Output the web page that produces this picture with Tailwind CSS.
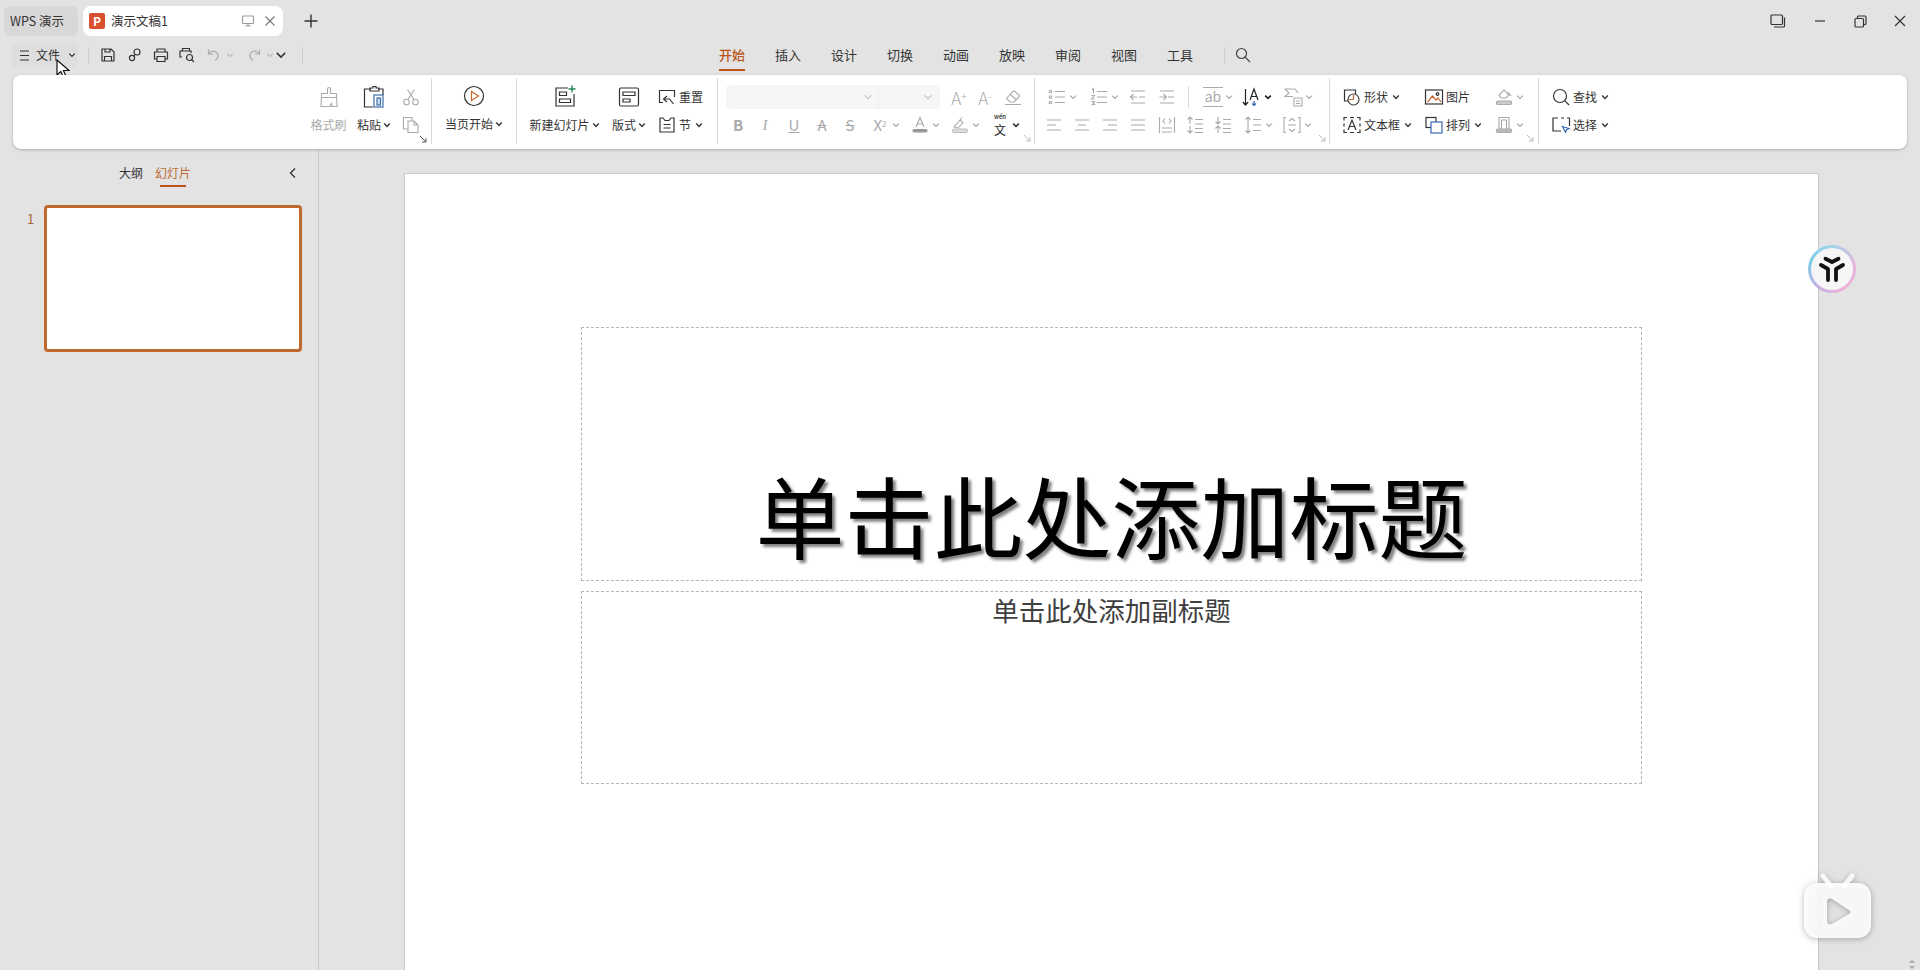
<!DOCTYPE html>
<html lang="zh-CN">
<head>
  <meta charset="UTF-8" />
  <title>演示文稿1 - WPS 演示</title>
  <script src="https://cdn.jsdelivr.net/npm/@tailwindcss/browser@4"></script>
</head>
<body class="bg-[#e3e3e3] overflow-hidden font-['Noto_Sans_CJK_SC','Noto_Sans',sans-serif] text-[12px] text-[#333]">
  <svg class="hidden">
    <symbol id="chev" viewBox="0 0 8 8"><path d="M1.2 2.6 4 5.4 6.8 2.6"/></symbol>
  </svg>

  <div class="relative w-[1920px] h-[970px] overflow-hidden flex flex-col">
    <!-- tab bar -->
    <div class="h-[38px] pt-[6px] pl-[4px] flex shrink-0">
      <div class="w-[74px] h-[30px] rounded-md bg-[#d8d8d8] flex items-center pl-[6px] text-[12.5px] whitespace-nowrap">WPS 演示</div>
      <div class="ml-[5px] w-[200px] h-[30px] rounded-lg bg-white flex items-center pl-[6px]">
        <span class="w-4 h-4 rounded-[2px] bg-[#d9502e] text-white text-[12px] font-bold leading-4 text-center">P</span>
        <span class="ml-[6px] w-[130px] text-[12.5px]">演示文稿1</span>
        <svg class="w-[14px] h-[14px] fill-none stroke-[#999] stroke-[1.1]" viewBox="0 0 14 14"><rect x="1.5" y="2" width="11" height="7.5" rx="1"/><path d="M7 9.5v2.5M4.5 12h5"/></svg>
        <svg class="ml-[9px] w-[12px] h-[12px] fill-none stroke-[#777] stroke-[1.1]" viewBox="0 0 12 12"><path d="M1.5 1.5l9 9M10.5 1.5l-9 9"/></svg>
      </div>
      <svg class="ml-[21px] mt-[8px] w-[14px] h-[14px] fill-none stroke-[#333] stroke-[1.4]" viewBox="0 0 14 14"><path d="M7 .5v13M.5 7h13"/></svg>
      <div class="ml-auto flex items-center h-[30px] text-[#333]">
        <svg class="w-[16px] h-[14px] fill-none stroke-current stroke-[1.2]" viewBox="0 0 16 14"><rect x="1" y="1" width="11.5" height="9.5" rx="1"/><path d="M14.5 3.5V12a1 1 0 0 1-1 1H4"/></svg>
        <svg class="ml-[28px] w-[12px] h-[12px] fill-none stroke-current stroke-[1.2]" viewBox="0 0 12 12"><path d="M1 6h10"/></svg>
        <svg class="ml-[28px] w-[13px] h-[13px] fill-none stroke-current stroke-[1.2]" viewBox="0 0 13 13"><rect x="1" y="3.5" width="8.5" height="8.5" rx="1"/><path d="M3.5 3.5V2a1 1 0 0 1 1-1H11a1 1 0 0 1 1 1v6.5a1 1 0 0 1-1 1H9.5"/></svg>
        <svg class="ml-[27px] mr-[14px] w-[12px] h-[12px] fill-none stroke-current stroke-[1.2]" viewBox="0 0 12 12"><path d="M1 1l10 10M11 1 1 11"/></svg>
      </div>
    </div>

    <!-- quick access + menu tabs -->
    <div class="h-[34px] flex items-center shrink-0 relative">
      <div class="ml-[12px] w-[66px] h-[24px] rounded bg-[#dedede] flex items-center pl-[8px]">
        <svg class="w-[9px] h-[11px] fill-none stroke-[#333] stroke-[1.1]" viewBox="0 0 9 11"><path d="M0 1h9M0 5.500h9M0 10h9"/></svg>
        <span class="ml-[7px] w-[26px]">文件</span>
        <svg class="ml-[6px] w-2 h-2 fill-none stroke-[#333] stroke-[1.3]"><use href="#chev"/></svg>
      </div>
      <span class="ml-[10px] w-px h-[17px] bg-[#cfcfcf]"></span>
      <svg class="ml-[11px] w-4 h-4 fill-none stroke-[#333] stroke-[1.2]" viewBox="0 0 16 16"><path d="M2 2h9l3 3v9H2zM5 2v3h5V2M4.5 14V9.5h7V14"/></svg>
      <svg class="ml-[11px] w-4 h-4 fill-none stroke-[#333] stroke-[1.2]" viewBox="0 0 16 16"><circle cx="10" cy="5" r="3"/><circle cx="5" cy="11" r="2.6"/><path d="M8 7.5 7 9"/></svg>
      <svg class="ml-[10px] w-4 h-4 fill-none stroke-[#333] stroke-[1.2]" viewBox="0 0 16 16"><path d="M4 5V2h8v3M4 12H1.5V5h13v7H12M4 9.5h8V14.5H4z"/></svg>
      <svg class="ml-[10px] w-4 h-4 fill-none stroke-[#333] stroke-[1.2]" viewBox="0 0 16 16"><path d="M3.5 4V1.5h7V4M3 10H1V4h11v2"/><circle cx="10.5" cy="10.5" r="3"/><path d="M12.8 12.8 15 15"/></svg>
      <svg class="ml-[12px] w-[14px] h-[14px] fill-none stroke-[#aaa] stroke-[1.2]" viewBox="0 0 14 14"><path d="M1.500 1.500v4.500H6M2 5.500a5 5 0 0 1 8.500 0c1 2.500.5 5-2.500 7"/></svg>
      <svg class="ml-[5px] w-2 h-2 fill-none stroke-[#bbb] stroke-[1.3]"><use href="#chev"/></svg>
      <svg class="ml-[13px] w-[14px] h-[14px] fill-none stroke-[#aaa] stroke-[1.2]" viewBox="0 0 14 14"><path d="M12.500 1.500v4.500H8M12 5.500a5 5 0 0 0-8.500 0c-1 2.500-.5 5 2.500 7"/></svg>
      <svg class="ml-[5px] w-2 h-2 fill-none stroke-[#bbb] stroke-[1.3]"><use href="#chev"/></svg>
      <svg class="ml-[1px] w-[12px] h-[12px] fill-none stroke-[#333] stroke-[1]" viewBox="0 0 8 8"><path d="M1.200 2.600 4 5.400 6.800 2.600"/></svg>
      <span class="ml-[15px] w-px h-[17px] bg-[#cfcfcf]"></span>
      <nav class="ml-[401px] flex text-[13px] text-center">
        <a class="relative w-[56px] text-[#b9531a] font-medium">开始<span class="absolute left-[15px] top-[24px] w-[26px] h-[2px] bg-[#b9531a]"></span></a>
        <a class="w-[56px]">插入</a>
        <a class="w-[56px]">设计</a>
        <a class="w-[56px]">切换</a>
        <a class="w-[56px]">动画</a>
        <a class="w-[56px]">放映</a>
        <a class="w-[56px]">审阅</a>
        <a class="w-[56px]">视图</a>
        <a class="w-[56px]">工具</a>
      </nav>
      <span class="ml-[16px] w-px h-[17px] bg-[#cfcfcf]"></span>
      <svg class="ml-[10px] w-4 h-4 fill-none stroke-[#444] stroke-[1.2]" viewBox="0 0 16 16"><circle cx="6.5" cy="6.5" r="5"/><path d="M10.2 10.2 15 15"/></svg>
    </div>

    <!-- ribbon -->
    <div class="mt-[3px] ml-[13px] w-[1894px] h-[74px] pb-[2px] bg-white rounded-lg shadow-[0_1px_3px_rgba(0,0,0,0.25)] flex items-center shrink-0 relative z-10">
      <!-- clipboard -->
      <div class="relative w-[419px] h-[66px] border-r border-[#d9d9d9] flex items-center pl-[297px]">
        <div class="w-[37px] flex flex-col items-center text-[#aaa]">
          <div class="h-[28px] flex items-center">
            <svg class="w-[22px] h-[22px] fill-none stroke-current stroke-[1.1]" viewBox="0 0 22 22"><path d="M9.500 7.500V3a1.500 1.500 0 0 1 3 0v4.500h6l.5 13H14l-.5-3-1.500 3H3l.5-13zM3.500 11.500h15"/></svg>
          </div>
          <div class="h-[28px] leading-[28px] whitespace-nowrap">格式刷</div>
        </div>
        <div class="ml-[7px] w-[40px] flex flex-col items-center">
          <div class="h-[28px] flex items-center">
            <svg class="w-[24px] h-[24px] fill-none stroke-[#333] stroke-[1.2]" viewBox="0 0 24 24"><path d="M9 4H2.500v18H11M16 4h5v6M8 6h9V3h-3V1.500h-3V3H8z"/><rect x="12" y="10" width="9" height="12" stroke="#3b6ea8"/><rect x="15" y="13" width="3.500" height="7" fill="#cfe0f2" stroke="#3b6ea8"/></svg>
          </div>
          <div class="h-[28px] flex items-center gap-[2px]">粘贴<svg class="w-2 h-2 fill-none stroke-[#333] stroke-[1.4]"><use href="#chev"/></svg></div>
        </div>
        <div class="ml-[3px] w-[28px] flex flex-col items-center text-[#aaa]">
          <div class="h-[28px] flex items-center">
            <svg class="w-[18px] h-[18px] fill-none stroke-current stroke-[1.1]" viewBox="0 0 18 18"><circle cx="4.500" cy="14" r="2.800"/><circle cx="13.500" cy="14" r="2.800"/><path d="M6 11.500 12.500 1.500M12 11.500 5.500 1.500"/></svg>
          </div>
          <div class="h-[28px] flex items-center">
            <svg class="w-[18px] h-[18px] fill-none stroke-current stroke-[1.1]" viewBox="0 0 18 18"><path d="M6 13H1.500V1.500H10V5M6 5h6l4 4v7.500H6zM12 5v4h4"/></svg>
          </div>
        </div>
        <svg class="absolute right-[4px] bottom-[1px] w-2 h-2 fill-none stroke-[#555] stroke-[1]" viewBox="0 0 8 8"><path d="M1 1l6 6M7 3v4H3"/></svg>
      </div>

      <!-- slideshow -->
      <div class="w-[85px] h-[66px] border-r border-[#d9d9d9] flex flex-col items-center">
        <div class="mt-[4px] h-[28px] flex items-center">
          <svg class="w-[22px] h-[22px] fill-none stroke-[#333] stroke-[1.200]" viewBox="0 0 22 22"><circle cx="11" cy="11" r="9.500"/><path d="M8.500 6.500 15.500 11l-7 4.500z" stroke="#c96a2e"/></svg>
        </div>
        <div class="h-[28px] flex items-center gap-[2px] whitespace-nowrap">当页开始<svg class="w-2 h-2 fill-none stroke-[#333] stroke-[1.4]"><use href="#chev"/></svg></div>
      </div>

      <!-- slides -->
      <div class="w-[201px] h-[66px] border-r border-[#d9d9d9] flex items-center pl-[12px]">
        <div class="w-[71px] flex flex-col items-center">
          <div class="h-[28px] flex items-center">
            <svg class="w-[24px] h-[24px] fill-none stroke-[#333] stroke-[1.200]" viewBox="0 0 24 24"><path d="M15 3H3v18h18V9"/><path d="M6.500 7h7v3.500h-7zM6.500 14h11v3.500h-11z"/><path d="M19 .500v7M15.500 4h7" stroke="#1f8a55" stroke-width="1.400"/></svg>
          </div>
          <div class="h-[28px] flex items-center gap-[2px] whitespace-nowrap">新建幻灯片<svg class="w-2 h-2 fill-none stroke-[#333] stroke-[1.4]"><use href="#chev"/></svg></div>
        </div>
        <div class="ml-[12px] w-[34px] flex flex-col items-center">
          <div class="h-[28px] flex items-center">
            <svg class="w-[22px] h-[22px] fill-none stroke-[#333] stroke-[1.200]" viewBox="0 0 22 22"><rect x="1.500" y="2" width="19" height="18" rx="1.500"/><path d="M5 6h12v3.500H5zM5 13h7v3H5z"/></svg>
          </div>
          <div class="h-[28px] flex items-center gap-[2px] whitespace-nowrap">版式<svg class="w-2 h-2 fill-none stroke-[#333] stroke-[1.4]"><use href="#chev"/></svg></div>
        </div>
        <div class="ml-[12px] flex flex-col">
          <div class="h-[28px] flex items-center">
            <svg class="w-[18px] h-[18px] fill-none stroke-[#333] stroke-[1.200]" viewBox="0 0 18 18"><path d="M5 14.500H1.500V2.500h15V9"/><path d="M9 8 5.500 11 9 14M5.500 11h6l4 5"/></svg>
            <span class="ml-[3px]">重置</span>
          </div>
          <div class="h-[28px] flex items-center">
            <svg class="w-[18px] h-[18px] fill-none stroke-[#333] stroke-[1.200]" viewBox="0 0 18 18"><path d="M5 2H2v14h14V2h-3l-2 2.500H7zM5.500 8.500h7M5.500 12h7"/></svg>
            <span class="ml-[3px]">节</span>
            <svg class="ml-[4px] w-2 h-2 fill-none stroke-[#333] stroke-[1.4]"><use href="#chev"/></svg>
          </div>
        </div>
      </div>

      <!-- font -->
      <div class="relative w-[317px] h-[66px] border-r border-[#d9d9d9] flex flex-col justify-center text-[#aaa]">
        <div class="h-[28px] flex items-center">
          <div class="ml-[8px] w-[214px] h-[24px] rounded bg-[#f6f6f6] flex items-center">
            <span class="w-[153px] flex justify-end pr-[5px] border-r border-[#eeeeee] h-full items-center"><svg class="w-[10px] h-[10px] fill-none stroke-[#ccc] stroke-[1]" viewBox="0 0 8 8"><use href="#chev"/></svg></span>
            <span class="w-[60px] flex justify-end pr-[6px] items-center"><svg class="w-[10px] h-[10px] fill-none stroke-[#ccc] stroke-[1]" viewBox="0 0 8 8"><use href="#chev"/></svg></span>
          </div>
          <span class="ml-[6px] w-[26px] text-[17px] font-light leading-none text-center">A<sup class="text-[10px]">+</sup></span>
          <span class="w-[26px] text-[17px] font-light leading-none text-center">A<sup class="text-[10px]">-</sup></span>
          <span class="ml-[2px] w-[26px] flex justify-center">
            <svg class="w-[18px] h-[18px] fill-none stroke-current stroke-[1.100]" viewBox="0 0 18 18"><path d="M2.500 10.500 9 3.500a1.500 1.500 0 0 1 2 0l4 3.500a1.500 1.500 0 0 1 0 2L10 14H6zM6.500 6.500l5.500 5M1 16.500h16"/></svg>
          </span>
        </div>
        <div class="h-[28px] flex items-center text-[15px]">
          <span class="ml-[8px] w-[24px] text-center font-bold">B</span>
          <span class="w-[30px] text-center italic [font-family:'Liberation_Serif',serif]">I</span>
          <span class="w-[28px] text-center underline">U</span>
          <span class="w-[28px] text-center line-through">A</span>
          <span class="w-[28px] text-center line-through">S</span>
          <span class="ml-[6px] w-[20px] text-center">X<sup class="text-[8px]">2</sup></span>
          <span class="w-3 flex justify-center"><svg class="w-2 h-2 fill-none stroke-[#aaa] stroke-[1.300]"><use href="#chev"/></svg></span>
          <span class="ml-[8px] w-[20px] flex justify-center">
            <svg class="w-[18px] h-[18px]" viewBox="0 0 18 18"><path d="M5 11 9 1.500 13 11M6.200 8h5.600" fill="none" stroke="#aaa" stroke-width="1.100"/><rect x="1.500" y="13" width="15" height="3.500" rx="1.500" fill="#999"/></svg>
          </span>
          <span class="w-3 flex justify-center"><svg class="w-2 h-2 fill-none stroke-[#aaa] stroke-[1.300]"><use href="#chev"/></svg></span>
          <span class="ml-[8px] w-[20px] flex justify-center">
            <svg class="w-[18px] h-[18px]" viewBox="0 0 18 18"><path d="M3 11 9 4l3 2.500-5 5.500zM11 1.500 8.500 5" fill="none" stroke="#aaa" stroke-width="1.100"/><rect x="1.500" y="13" width="15" height="3.500" rx="1.500" fill="#ddd" stroke="#bbb"/></svg>
          </span>
          <span class="w-3 flex justify-center"><svg class="w-2 h-2 fill-none stroke-[#aaa] stroke-[1.300]"><use href="#chev"/></svg></span>
          <span class="ml-[8px] w-[20px] h-[27px] flex flex-col items-center text-[#222]">
            <span class="text-[6px] leading-[9px] h-[9px] font-medium">wén</span><span class="text-[12px] leading-[18px] h-[18px]">文</span>
          </span>
          <span class="w-3 flex justify-center"><svg class="w-2 h-2 fill-none stroke-[#333] stroke-[1.500]"><use href="#chev"/></svg></span>
        </div>
        <svg class="absolute right-[3px] bottom-[2px] w-2 h-2 fill-none stroke-[#bbb] stroke-[1]" viewBox="0 0 8 8"><path d="M1 1l6 6M7 3v4H3"/></svg>
      </div>

      <!-- paragraph -->
      <div class="relative w-[295px] h-[66px] border-r border-[#d9d9d9] flex flex-col justify-center text-[#aaa]">
        <div class="h-[28px] flex items-center">
          <svg class="ml-[12px] w-5 h-5 fill-none stroke-current stroke-[1.100]" viewBox="0 0 20 20"><path d="M8 4.500h10M8 10h10M8 15.500h10"/><circle cx="3.500" cy="4.500" r="1.300"/><circle cx="3.500" cy="10" r="1.300"/><circle cx="3.500" cy="15.500" r="1.300"/></svg>
          <span class="w-3 flex justify-center"><svg class="w-2 h-2 fill-none stroke-[#aaa] stroke-[1.300]"><use href="#chev"/></svg></span>
          <svg class="ml-[10px] w-5 h-5 fill-none stroke-current stroke-[1.100]" viewBox="0 0 20 20"><path d="M8 4.500h10M8 10h10M8 15.500h10M3 2.500l1.500-1v5M2.500 8.500h3l-3 3.500h3M2.500 14.500h3l-1.500 1.500 1.500 1.500h-3"/></svg>
          <span class="w-3 flex justify-center"><svg class="w-2 h-2 fill-none stroke-[#aaa] stroke-[1.300]"><use href="#chev"/></svg></span>
          <svg class="ml-[7px] w-5 h-5 fill-none stroke-current stroke-[1.100]" viewBox="0 0 20 20"><path d="M3 4h14M3 16h14M11 10h6M9 10H2.500M5.500 7l-3 3 3 3"/></svg>
          <svg class="ml-[9px] w-5 h-5 fill-none stroke-current stroke-[1.100]" viewBox="0 0 20 20"><path d="M3 4h14M3 16h14M11 10h6M2.500 10H9M6.500 7l3 3-3 3"/></svg>
          <span class="ml-[11px] w-px h-[22px] bg-[#d9d9d9]"></span>
          <span class="ml-[14px] w-5 h-[20px] border-y border-[#aaa] text-[14px] leading-[16px] text-center">ab</span>
          <span class="w-3 flex justify-center"><svg class="w-2 h-2 fill-none stroke-[#aaa] stroke-[1.300]"><use href="#chev"/></svg></span>
          <svg class="ml-[7px] w-5 h-5 fill-none stroke-[#222] stroke-[1.200]" viewBox="0 0 20 20"><path d="M3.500 2v16M.800 15l2.700 3 2.700-3M8 13 12 2l4 11M9.300 9.500h5.400"/><path d="M12 14v4.500M10 16.500l2 2 2-2" stroke="#3568b5"/></svg>
          <span class="w-3 flex justify-center"><svg class="w-2 h-2 fill-none stroke-[#222] stroke-[1.600]"><use href="#chev"/></svg></span>
          <svg class="ml-[9px] w-5 h-5 fill-none stroke-current stroke-[1.100]" viewBox="0 0 20 20"><path d="M10 9.500H2l4-3.500-4-4h10l3 4M11 11h8v8h-8zM13 14h4M13 16.500h4"/></svg>
          <span class="w-3 flex justify-center"><svg class="w-2 h-2 fill-none stroke-[#aaa] stroke-[1.300]"><use href="#chev"/></svg></span>
        </div>
        <div class="h-[28px] flex items-center">
          <svg class="ml-[9px] w-5 h-5 fill-none stroke-current stroke-[1.100]" viewBox="0 0 20 20"><path d="M3 5h14M3 10h9M3 15h14"/></svg>
          <svg class="ml-[8px] w-5 h-5 fill-none stroke-current stroke-[1.100]" viewBox="0 0 20 20"><path d="M3 5h14M6 10h8M3 15h14"/></svg>
          <svg class="ml-[8px] w-5 h-5 fill-none stroke-current stroke-[1.100]" viewBox="0 0 20 20"><path d="M3 5h14M8 10h9M3 15h14"/></svg>
          <svg class="ml-[8px] w-5 h-5 fill-none stroke-current stroke-[1.100]" viewBox="0 0 20 20"><path d="M3 5h14M3 10h14M3 15h14"/></svg>
          <svg class="ml-[9px] w-5 h-5 fill-none stroke-current stroke-[1.100]" viewBox="0 0 20 20"><path d="M2.500 2v16M17.500 2v16M5 13h10M5 17h10M8 3.500 6 6l2 2.500M12 3.500 14 6l-2 2.500"/></svg>
          <svg class="ml-[8px] w-5 h-5 fill-none stroke-current stroke-[1.100]" viewBox="0 0 20 20"><path d="M10 4.500h8M10 9h8M10 13.500h8M10 17.500h8M5 2v7M2.500 4.500 5 2l2.500 2.500M5 11v7M2.500 15.500 5 18l2.500-2.500"/></svg>
          <svg class="ml-[8px] w-5 h-5 fill-none stroke-current stroke-[1.100]" viewBox="0 0 20 20"><path d="M10 4.500h8M10 9h8M10 13.500h8M10 17.500h8M5 2v7M2.500 6.500 5 9l2.500-2.500M5 11v7M2.500 13.500 5 11l2.500 2.500"/></svg>
          <svg class="ml-[10px] w-5 h-5 fill-none stroke-current stroke-[1.100]" viewBox="0 0 20 20"><path d="M10 4.500h8M10 10h8M10 15.500h8M5 2v16M2.500 4.500 5 2l2.500 2.500M2.500 15.500 5 18l2.500-2.500"/></svg>
          <span class="w-3 flex justify-center"><svg class="w-2 h-2 fill-none stroke-[#aaa] stroke-[1.300]"><use href="#chev"/></svg></span>
          <svg class="ml-[7px] w-5 h-5 fill-none stroke-current stroke-[1.100]" viewBox="0 0 20 20"><path d="M4 2.500H2v15h2M16 2.500h2v15h-2M6 10h8M7 6l3-2.500L13 6M7 14l3 2.500L13 14"/></svg>
          <span class="w-3 flex justify-center"><svg class="w-2 h-2 fill-none stroke-[#aaa] stroke-[1.300]"><use href="#chev"/></svg></span>
        </div>
        <svg class="absolute right-[3px] bottom-[2px] w-2 h-2 fill-none stroke-[#bbb] stroke-[1]" viewBox="0 0 8 8"><path d="M1 1l6 6M7 3v4H3"/></svg>
      </div>

      <!-- drawing -->
      <div class="relative w-[209px] h-[66px] border-r border-[#d9d9d9] flex flex-col justify-center">
        <div class="h-[28px] flex items-center">
          <svg class="ml-[12px] w-5 h-5 fill-none stroke-[#333] stroke-[1.200]" viewBox="0 0 20 20"><path d="M7 14H2.500V3h11v5"/><circle cx="11.500" cy="12.500" r="5.500" stroke="#444"/><path d="M11.500 8v4.500H7" stroke="#c96a2e"/></svg>
          <span class="ml-[2px] w-[24px]">形状</span>
          <span class="ml-[2px] w-3 flex justify-center"><svg class="w-2 h-2 fill-none stroke-[#333] stroke-[1.400]"><use href="#chev"/></svg></span>
          <svg class="ml-[22px] w-5 h-5 fill-none stroke-[#333] stroke-[1.200]" viewBox="0 0 20 20"><rect x="1.500" y="3" width="17" height="14"/><path d="M3.500 15l5-6 3.500 4 2-2 3 4" stroke="#c96a2e"/><circle cx="13.500" cy="7" r="1.300"/></svg>
          <span class="ml-[2px] w-[24px]">图片</span>
          <svg class="ml-[24px] w-5 h-5 fill-none stroke-[#aaa] stroke-[1.100]" viewBox="0 0 20 20"><path d="M5 8l5-5 5 5-3 3H7zM14 5l3 4"/><rect x="2.500" y="14" width="15" height="3.500" rx="1.200" fill="#ccc"/></svg>
          <span class="w-3 flex justify-center"><svg class="w-2 h-2 fill-none stroke-[#aaa] stroke-[1.300]"><use href="#chev"/></svg></span>
        </div>
        <div class="h-[28px] flex items-center">
          <svg class="ml-[12px] w-5 h-5 fill-none stroke-[#333] stroke-[1.200]" viewBox="0 0 20 20"><path d="M5 2.500H2v3M15 2.500h3v3M2 14.500v3h3M18 14.500v3h-3M8 2.500h4M8 17.500h4M2 8.500v3M18 8.500v3"/><path d="M6 15 10 5l4 10M7.300 11.500h5.400"/></svg>
          <span class="ml-[2px] w-[36px]">文本框</span>
          <span class="ml-[2px] w-3 flex justify-center"><svg class="w-2 h-2 fill-none stroke-[#333] stroke-[1.400]"><use href="#chev"/></svg></span>
          <svg class="ml-[10px] w-5 h-5 fill-none stroke-[#333] stroke-[1.200]" viewBox="0 0 20 20"><rect x="2" y="2.500" width="10" height="10"/><rect x="7" y="7" width="11" height="11" fill="#fff" stroke="#3568b5"/></svg>
          <span class="ml-[2px] w-[24px]">排列</span>
          <span class="ml-[2px] w-3 flex justify-center"><svg class="w-2 h-2 fill-none stroke-[#333] stroke-[1.400]"><use href="#chev"/></svg></span>
          <svg class="ml-[10px] w-5 h-5 fill-none stroke-[#aaa] stroke-[1.100]" viewBox="0 0 20 20"><path d="M5 14V2.500h10V14M7.500 14V5h5v9"/><rect x="2.500" y="14" width="15" height="3.500" rx="1.200" fill="#bbb"/></svg>
          <span class="w-3 flex justify-center"><svg class="w-2 h-2 fill-none stroke-[#aaa] stroke-[1.300]"><use href="#chev"/></svg></span>
        </div>
        <svg class="absolute right-[4px] bottom-[2px] w-2 h-2 fill-none stroke-[#bbb] stroke-[1]" viewBox="0 0 8 8"><path d="M1 1l6 6M7 3v4H3"/></svg>
      </div>

      <!-- find -->
      <div class="flex flex-col justify-center h-[66px]">
        <div class="h-[28px] flex items-center">
          <svg class="ml-[12px] w-5 h-5 fill-none stroke-[#333] stroke-[1.200]" viewBox="0 0 20 20"><circle cx="9" cy="9" r="6.500"/><path d="M13.700 13.700 18 18"/></svg>
          <span class="ml-[2px] w-[24px]">查找</span>
          <span class="ml-[2px] w-3 flex justify-center"><svg class="w-2 h-2 fill-none stroke-[#333] stroke-[1.400]"><use href="#chev"/></svg></span>
        </div>
        <div class="h-[28px] flex items-center">
          <svg class="ml-[12px] w-5 h-5 fill-none stroke-[#333] stroke-[1.200]" viewBox="0 0 20 20"><path d="M7 3H2v13h8M10 3h3M16 3h2.500v8"/><path d="M11.500 11.500 18 13.500l-2.500 1.200-1 2.500z" stroke="#3568b5"/></svg>
          <span class="ml-[2px] w-[24px]">选择</span>
          <span class="ml-[2px] w-3 flex justify-center"><svg class="w-2 h-2 fill-none stroke-[#333] stroke-[1.400]"><use href="#chev"/></svg></span>
        </div>
      </div>
    </div>

    <!-- workspace -->
    <div class="flex flex-1 min-h-0">
      <aside class="w-[319px] shrink-0 border-r border-[#cbcbcb] flex flex-col">
        <div class="mt-[14px] h-[20px] flex items-center text-[12px]">
          <span class="ml-[119px] w-[24px]">大纲</span>
          <span class="relative ml-[12px] w-[36px] text-[#bd6a32]">幻灯片<span class="absolute left-[5px] top-[21px] w-[26px] h-[2px] bg-[#b9531a]"></span></span>
          <svg class="ml-[96px] w-[12px] h-[12px] fill-none stroke-[#333] stroke-[1.300]" viewBox="0 0 12 12"><path d="M8 1.500 3.500 6 8 10.500"/></svg>
        </div>
        <div class="mt-[22px] flex">
          <span class="w-[44px] pl-[27px] pt-[4px] text-[13px] text-[#a8663a]">1</span>
          <div class="w-[258px] h-[147px] rounded bg-white border-[3px] border-[#c0692f]"></div>
        </div>
      </aside>
      <main class="flex-1 min-w-0 pl-[85px] pt-[24px]">
        <div class="w-[1415px] h-[900px] bg-white border border-[#c9c9c9] pl-[176px] pt-[153px] overflow-hidden">
          <div class="w-[1061px] h-[254px] border border-dashed border-[#b5b5b5] flex items-end justify-center">
            <span class="text-[89px] leading-[120px] pb-[6px] text-black [text-shadow:3px_3px_3px_rgba(0,0,0,0.5)] whitespace-nowrap">单击此处添加标题</span>
          </div>
          <div class="mt-[10px] w-[1061px] h-[193px] border border-dashed border-[#b5b5b5] text-center">
            <span class="block text-[26.500px] leading-[36px] text-[#404040] whitespace-nowrap">单击此处添加副标题</span>
          </div>
        </div>
      </main>
    </div>

    <!-- floating assistant -->
    <div class="absolute left-[1808px] top-[245px] w-[48px] h-[48px] rounded-full bg-[conic-gradient(#a0d4ec,#e0b5e0,#f0b0d8,#c5b0e4,#7ccbe6,#a0d4ec)] p-[3px]">
      <div class="w-full h-full rounded-full bg-[#f6f6f6] flex items-center justify-center">
        <svg class="w-[28px] h-[28px] fill-none stroke-[#111] stroke-[3.800]" viewBox="0 0 28 28" stroke-linecap="round" stroke-linejoin="round"><path d="M7.500 3.700 14 7l6.500-3.300M3 10l7 4v11M25 10l-7 4v11"/></svg>
      </div>
    </div>

    <!-- floating video button -->
    <svg class="absolute left-[1802px] top-[872px] w-[70px] h-[70px] drop-shadow-[0_1px_3px_rgba(0,0,0,0.3)]" viewBox="0 0 70 70">
      <path d="M21 4 29 14M50 4 42 14" stroke="#fff" stroke-opacity="0.85" stroke-width="5" stroke-linecap="round"/>
      <path fill="#fff" fill-opacity="0.9" fill-rule="evenodd" d="M15 11h41a13 13 0 0 1 13 13v29a13 13 0 0 1-13 13H15A13 13 0 0 1 2 53V24a13 13 0 0 1 13-13zM25 29v20c0 3 2 4 5 3l17-10c2-1 2-3 0-4L30 27c-3-1-5 0-5 2z"/>
    </svg>

    <!-- mouse pointer -->
    <svg class="absolute left-[56px] top-[59px] w-[14px] h-[20px]" viewBox="0 0 14 20"><path d="M1 1v15l3.800-3.500 2.700 6 2.500-1.200-2.600-5.800H13z" fill="#fff" stroke="#111" stroke-width="1.200"/></svg>

    <!-- corner fit icon -->
    <svg class="absolute left-[1908px] top-[960px] w-[8px] h-[9px] fill-[#aaa]" viewBox="0 0 8 9"><path d="M4 0 7 3H1zM4 9 1 6h6z"/></svg>
  </div>
</body>
</html>
